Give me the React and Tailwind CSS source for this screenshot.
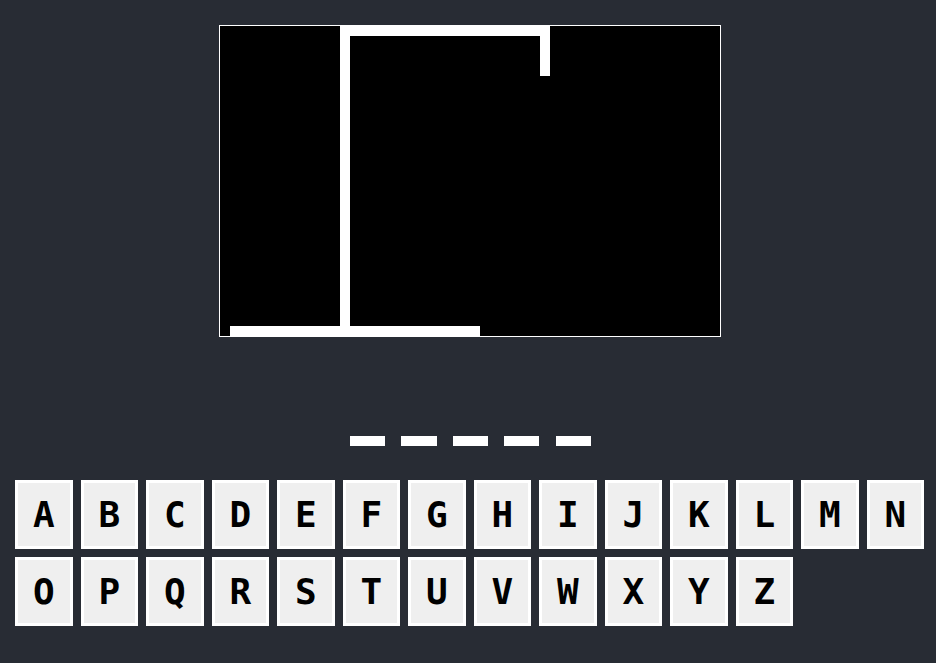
const letters = 'ABCDEFGHIJKLMNOPQRSTUVWXYZ'.split('')
const word = [0, 1, 2, 3, 4]

function Gallows() {
  return (
    <div className="ml-[219px] w-[502px] border border-white bg-black">
      <svg width="500" height="310" viewBox="0 0 500 310" className="block">
        <rect x="120" y="0" width="10" height="300" fill="#fff" />
        <rect x="120" y="0" width="210" height="10" fill="#fff" />
        <rect x="320" y="0" width="10" height="50" fill="#fff" />
        <rect x="10" y="300" width="250" height="10" fill="#fff" />
      </svg>
    </div>
  )
}

export default function App() {
  return (
    <div className="min-h-[663px] bg-[#282c34] pt-[25px] font-['DejaVu_Sans_Mono',monospace]">
      <Gallows />

      <div className="ml-[350px] mt-[99px] flex gap-[16.2px]">
        {word.map((i) => (
          <div key={i} className="h-[10px] w-[35.2px] bg-white" />
        ))}
      </div>

      <div className="mt-[34px] flex w-[936px] flex-wrap gap-[8px] pl-[15px] pr-[11px]">
        {letters.map((l) => (
          <button
            key={l}
            className="flex h-[69px] w-[57.5px] items-center justify-center border-[3px] border-white bg-[#efefef] text-[36px] font-bold leading-none text-black"
          >
            {l}
          </button>
        ))}
      </div>
    </div>
  )
}
